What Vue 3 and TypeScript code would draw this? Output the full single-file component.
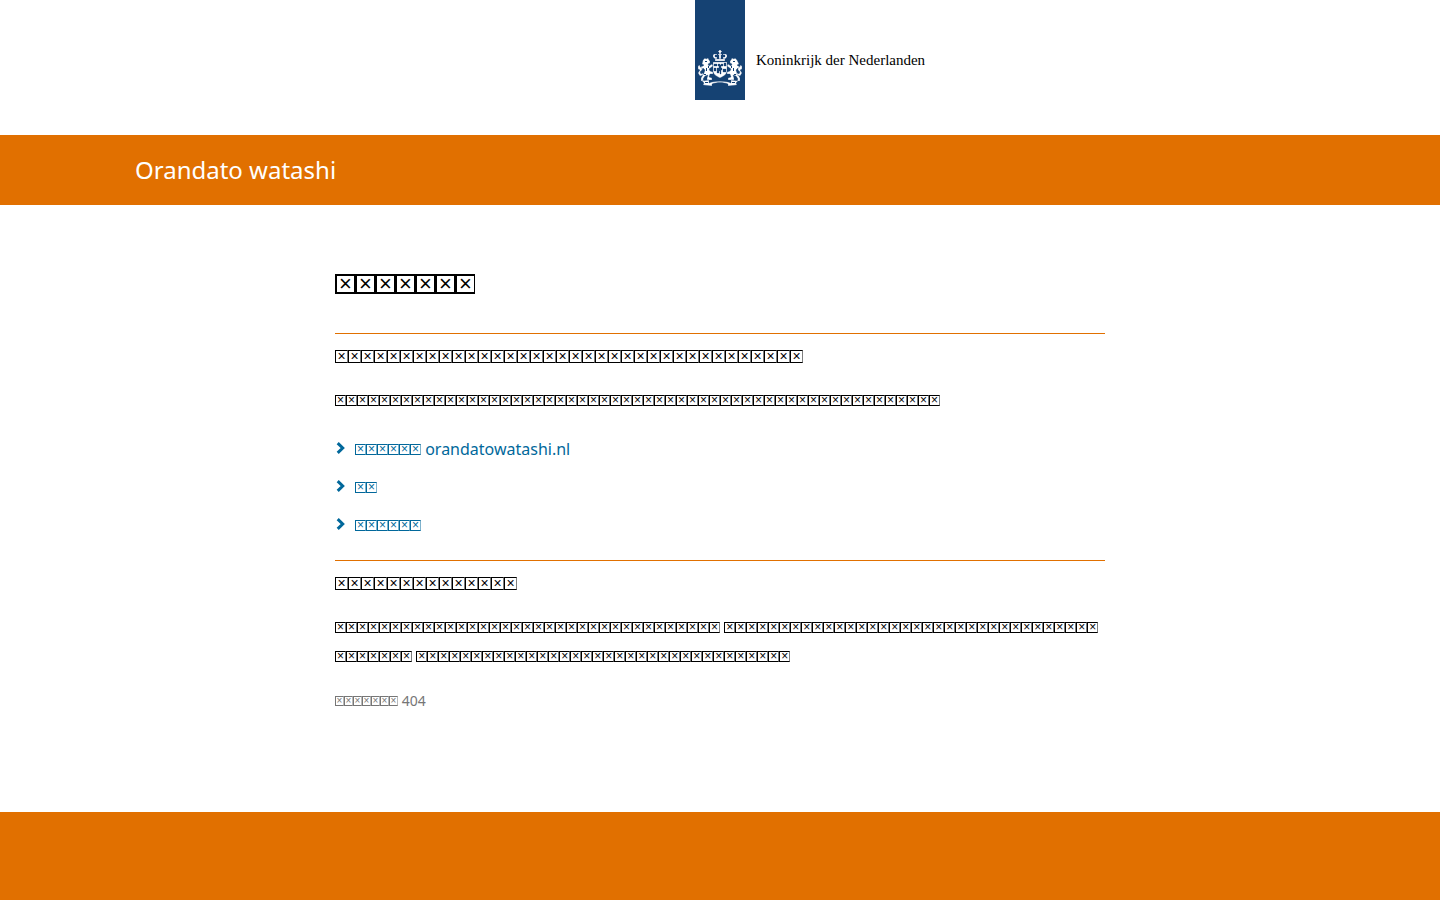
<script setup lang="ts">
interface TextBlock {
  id: string
  title: number
  words: number[]
}

interface LinkItem {
  id: string
  glyphs: number
  label: string
}

const heading = 7
const intro: TextBlock = { id: 'intro', title: 36, words: [55] }
const about: TextBlock = { id: 'about', title: 14, words: [35, 41, 34] }
const links: LinkItem[] = [
  { id: 'home', glyphs: 6, label: 'orandatowatashi.nl' },
  { id: 'search', glyphs: 2, label: '' },
  { id: 'contact', glyphs: 6, label: '' },
]
const status = { glyphs: 7, code: '404' }
</script>

<template>
  <div class="page">
    <header class="brand">
      <div class="ribbon">
        <svg class="arms" viewBox="0 0 44 37" aria-hidden="true">
          <g fill="#fff" stroke="#154273" stroke-width="0.300">
            <!-- crown -->
            <path d="M21 0h2v1h1v1h-1v2h-2V2h-1V1h1z" />
            <path d="M16 4h3v1h-2v2h2v2h-2L15 7V5zM25 4h3l1 1v2l-2 2h-2V7h2V5h-2zM20 4h4v1h-1v4h-2V5h-1z" />
            <path d="M17 9h10v2H17z" />
            <!-- shield -->
            <path fill-rule="evenodd" d="M15 12h14v9c0 3-3 5-7 7-4-2-7-4-7-7zM16 14v2h3v-2zM26 13v3h2v-3zM16 18v3h2v-3zM25 19v3h3v-3zM20 14v2h1v2h-2v5h2v-2h1v3h1v-4h1v-2h-1v-2h2v-2h-2v1h-1v-1z" />
            <!-- left lion -->
            <path d="M5 10l2-2 1 1 2-1 1 2 1 1v2l-2 1 1 2 3-2 1 2-4 3 1 2 3 1v2h-3l-1 3 3 1v2H9v-2l1-3-3 1-2 3 1 2H3v-3l3-5 1-3-2-2-1 2-2-1v-2l3-1 1-1-2-1z" />
            <path d="M0 16l2-1v2l2 1v2l-2 2 1 2 2-1v2l-3 1-2-3 2-3-2-1z" />
            <!-- right lion -->
            <path d="M39 10l-2-2-1 1-2-1-1 2-1 1v2l2 1-1 2-3-2-1 2 4 3-1 2-3 1v2h3l1 3-3 1v2h6v-2l-1-3 3 1 2 3-1 2h3v-3l-3-5-1-3 2-2 1 2 2-1v-2l-3-1-1-1 2-1z" />
            <path d="M44 16l-2-1v2l-2 1v2l2 2-1 2-2-1v2l3 1 2-3-2-3 2-1z" />
            <!-- motto -->
            <path d="M4 31l7-1v3l3-1c5-1 11-1 16 0l3 1v-3l7 1-2 2 1 2-9 1v-2c-5-2-11-2-16 0v2l-9-1 1-2z" />
          </g>
          <g fill="#154273">
            <path d="M7 11h2v1H7zM35 11h2v1h-2zM8 18h1v3H8zM35 18h1v3h-1zM7 32h3v1H7zM34 32h3v1h-3zM10 16h1v2h-1zM33 16h1v2h-1zM6 24h2v1H6zM36 24h2v1h-2z" />
          </g>
        </svg>
      </div>
      <span class="wordmark">Koninkrijk der Nederlanden</span>
    </header>

    <div class="titlebar">
      <p class="site-name">Orandato watashi</p>
    </div>

    <main class="content">
      <h1><span v-for="n in heading" :key="n" class="glyph glyph-xl">×</span></h1>

      <section class="block">
        <h2><span v-for="n in intro.title" :key="n" class="glyph glyph-lg">×</span></h2>
        <p class="copy">
          <template v-for="(count, i) in intro.words" :key="i"><span v-for="n in count" :key="n" class="glyph">×</span></template>
        </p>
        <ul class="links">
          <li v-for="link in links" :key="link.id">
            <a href="#">
              <svg class="chevron" viewBox="0 0 10 14" aria-hidden="true">
                <path d="M2.200 2.200L7.200 7L2.200 11.800" fill="none" stroke="currentColor" stroke-width="3" />
              </svg>
              <span><span v-for="n in link.glyphs" :key="n" class="glyph">×</span> {{ link.label }}</span>
            </a>
          </li>
        </ul>
      </section>

      <section class="block">
        <h2><span v-for="n in about.title" :key="n" class="glyph glyph-lg">×</span></h2>
        <p class="copy">
          <template v-for="(count, i) in about.words" :key="i"><span v-for="n in count" :key="n" class="glyph">×</span>{{ ' ' }}</template>
        </p>
        <p class="status"><span v-for="n in status.glyphs" :key="n" class="glyph glyph-sm">×</span> {{ status.code }}</p>
      </section>
    </main>

    <footer class="footer"></footer>
  </div>
</template>

<style>
body {
  margin: 0;
  background: #fff;
}
</style>

<style scoped>
.page {
  display: flex;
  flex-direction: column;
  min-height: 100vh;
  font-family: "Noto Sans", "Open Sans", sans-serif;
  font-size: 16px;
  color: #000;
}

.brand {
  display: grid;
  grid-template-columns: 1fr 50px 1fr;
  column-gap: 11px;
  height: 135px;
}

.ribbon {
  grid-column: 2;
  display: flex;
  align-items: flex-end;
  justify-content: center;
  box-sizing: border-box;
  height: 100px;
  padding-bottom: 13px;
  background: #154273;
}

.arms {
  width: 44px;
  height: 37px;
}

.wordmark {
  padding-top: 50px;
  font-family: "Liberation Serif", serif;
  font-size: 15px;
  line-height: 20px;
}

.titlebar {
  height: 70px;
  background: #e17000;
}

.site-name {
  max-width: 1170px;
  margin: 0 auto;
  font-size: 24px;
  line-height: 70px;
  color: #fff;
}

.content {
  flex: 1;
  box-sizing: border-box;
  width: 100%;
  max-width: 770px;
  margin: 0 auto;
  padding-top: 60px;
}

h1,
h2,
.copy,
.status,
.links {
  margin: 0;
  font-weight: 400;
}

h1 {
  height: 68px;
  font-size: 24px;
  line-height: 38px;
}

.block {
  border-top: 1px solid #e17000;
}

h2 {
  padding-top: 8px;
  font-size: 18px;
  line-height: 29px;
}

.copy {
  padding: 15px 0;
  line-height: 29px;
}

.links {
  padding: 5px 0 20px;
  list-style: none;
}

.links li {
  height: 38px;
}

.links li:last-child {
  height: 29px;
}

.links a {
  display: flex;
  gap: 9px;
  line-height: 29px;
  color: #01689b;
  text-decoration: none;
}

.chevron {
  width: 11px;
  height: 14px;
  margin-top: 6px;
}

.status {
  font-size: 14px;
  line-height: 29px;
  color: #767676;
}

.glyph {
  display: inline-block;
  box-sizing: border-box;
  width: 11px;
  height: 11px;
  border: 1px solid currentColor;
  border-right-color: color-mix(in srgb, currentColor 50%, transparent);
  font-family: "Liberation Sans", sans-serif;
  font-size: 12px;
  line-height: 9px;
  text-align: center;
  vertical-align: 2px;
}

.glyph-sm {
  width: 9px;
  height: 10px;
  font-size: 10px;
  line-height: 8px;
}

.glyph-lg {
  width: 13px;
  height: 13px;
  font-size: 14px;
  line-height: 11px;
}

.glyph-xl {
  width: 20px;
  height: 20px;
  border-width: 2px 1px 2px 2px;
  border-right-color: currentColor;
  font-size: 22px;
  line-height: 16px;
}

.footer {
  height: 88px;
  background: #e17000;
}
</style>
